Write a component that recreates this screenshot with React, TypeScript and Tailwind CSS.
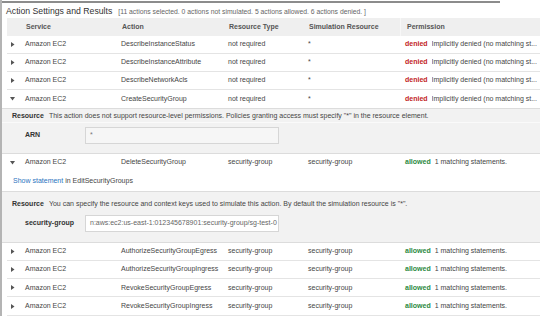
import { ReactNode } from 'react';

type Row = {
  action: string;
  resourceType: string;
  simResource: string;
  allowed: boolean;
  expanded?: boolean;
};

const rowsTop: Row[] = [
  { action: 'DescribeInstanceStatus', resourceType: 'not required', simResource: '*', allowed: false },
  { action: 'DescribeInstanceAttribute', resourceType: 'not required', simResource: '*', allowed: false },
  { action: 'DescribeNetworkAcls', resourceType: 'not required', simResource: '*', allowed: false },
  { action: 'CreateSecurityGroup', resourceType: 'not required', simResource: '*', allowed: false, expanded: true },
];

const rowsBottom: Row[] = [
  { action: 'AuthorizeSecurityGroupEgress', resourceType: 'security-group', simResource: 'security-group', allowed: true },
  { action: 'AuthorizeSecurityGroupIngress', resourceType: 'security-group', simResource: 'security-group', allowed: true },
  { action: 'RevokeSecurityGroupEgress', resourceType: 'security-group', simResource: 'security-group', allowed: true },
  { action: 'RevokeSecurityGroupIngress', resourceType: 'security-group', simResource: 'security-group', allowed: true },
];

const gridCols = 'grid grid-cols-[13px_96px_107px_80px_97px_1fr]';

const Caret = ({ open }: { open?: boolean }) =>
  open ? (
    <svg width="5" height="4" viewBox="0 0 5 4" className="ml-[3px]">
      <polygon points="0,0 5,0 2.5,3.5" fill="#555" />
    </svg>
  ) : (
    <svg width="4" height="5" viewBox="0 0 4 5" className="ml-[4px]">
      <polygon points="0,0 3.5,2.5 0,5" fill="#555" />
    </svg>
  );

const TableRow = ({ row, last }: { row: Row; last?: boolean }) => (
  <div
    className={`${gridCols} ml-[5px] h-[18px] items-center ${last ? '' : 'border-b border-[#e4e4e4]'}`}
  >
    <div className="flex items-center">
      <Caret open={row.expanded} />
    </div>
    <div className="pl-[5px] truncate">Amazon EC2</div>
    <div className="pl-[5px] truncate">{row.action}</div>
    <div className="pl-[5px] truncate">{row.resourceType}</div>
    <div className="pl-[5px] truncate">{row.simResource}</div>
    <div className="pl-[5px] flex gap-[4px] whitespace-nowrap overflow-hidden">
      {row.allowed ? (
        <span className="font-bold text-[#2a8a43]">allowed</span>
      ) : (
        <span className="font-bold text-[#c21d1d]">denied</span>
      )}
      <span className="truncate pr-[3px]">
        {row.allowed ? '1 matching statements.' : 'Implicitly denied (no matching st...'}
      </span>
    </div>
  </div>
);

const Field = ({ label, children, muted }: { label: string; children: ReactNode; muted?: boolean }) => (
  <div className="flex items-center h-[17px]">
    <div className="w-[83px] pl-[23px] font-bold text-[#333]">{label}</div>
    <div
      className={`w-[194px] h-[17px] flex items-center pl-[4px] border border-[#d6d6d6] truncate ${
        muted ? 'bg-[#f6f6f6] text-[#777]' : 'bg-white text-[#666]'
      }`}
    >
      {children}
    </div>
  </div>
);

const App = () => {
  const headers = ['Service', 'Action', 'Resource Type', 'Simulation Resource', 'Permission'];

  return (
    <div className="w-[540px] h-[316px] overflow-hidden bg-white font-['Liberation_Sans',Arial,sans-serif] text-[7px] text-[#454545]">
      <div className="h-full border-l-[2px] border-[#b4b4b4] flex flex-col">
        <div className="mt-[1px] h-[2px] w-[498px] bg-[#8c8c8c]" />
        <div className="h-[14px] flex items-end pl-[4px] gap-[6px] whitespace-nowrap">
          <span className="text-[8.7px] text-[#333] leading-none pb-[1px]">Action Settings and Results</span>
          <span className="text-[6.8px] text-[#666] leading-none pb-[1px]">
            [11 actions selected. 0 actions not simulated. 5 actions allowed. 6 actions denied. ]
          </span>
        </div>

        <div className={`${gridCols} ml-[5px] h-[18px] items-center bg-[#efefef] font-bold text-[#555] mt-[1px]`}>
          <div />
          {headers.map((h, i) => (
            <div key={h} className={`pl-[6px] h-full flex items-center ${i === 4 ? 'border-l border-[#f7f7f7]' : ''}`}>
              {h}
            </div>
          ))}
        </div>

        {rowsTop.map((row, i) => (
          <TableRow key={row.action} row={row} last={i === rowsTop.length - 1} />
        ))}

        <div className="h-[46px] bg-[#f2f2f2] border-y border-[#dcdcdc] flex flex-col">
          <div className="h-[13px] mt-[1px] flex items-center pl-[10px] gap-[5px] border-b border-[#fafafa] whitespace-nowrap">
            <span className="font-bold text-[#333]">Resource</span>
            <span>
              This action does not support resource-level permissions. Policies granting access must specify "*" in
              the resource element.
            </span>
          </div>
          <div className="mt-[4px]">
            <Field label="ARN" muted>
              *
            </Field>
          </div>
        </div>

        <TableRow
          row={{
            action: 'DeleteSecurityGroup',
            resourceType: 'security-group',
            simResource: 'security-group',
            allowed: true,
            expanded: true,
          }}
          last
        />

        <div className="h-[19px] flex items-center pl-[11px]">
          <span className="text-[#2a74c0]">Show statement</span>
          <span className="ml-[2px]">in EditSecurityGroups</span>
        </div>

        <div className="h-[52px] bg-[#f2f2f2] border-y border-[#dcdcdc] flex flex-col">
          <div className="h-[12px] mt-[7px] flex items-center pl-[10px] gap-[5px] whitespace-nowrap">
            <span className="font-bold text-[#333]">Resource</span>
            <span>
              You can specify the resource and context keys used to simulate this action. By default the simulation
              resource is "*".
            </span>
          </div>
          <div className="mt-[4px]">
            <Field label="security-group">n:aws:ec2:us-east-1:012345678901:security-group/sg-test-0</Field>
          </div>
        </div>

        {rowsBottom.map((row) => (
          <div key={row.action} className="h-[18.4px] flex flex-col">
            <TableRow row={row} />
          </div>
        ))}
      </div>
    </div>
  );
};

export default App;
